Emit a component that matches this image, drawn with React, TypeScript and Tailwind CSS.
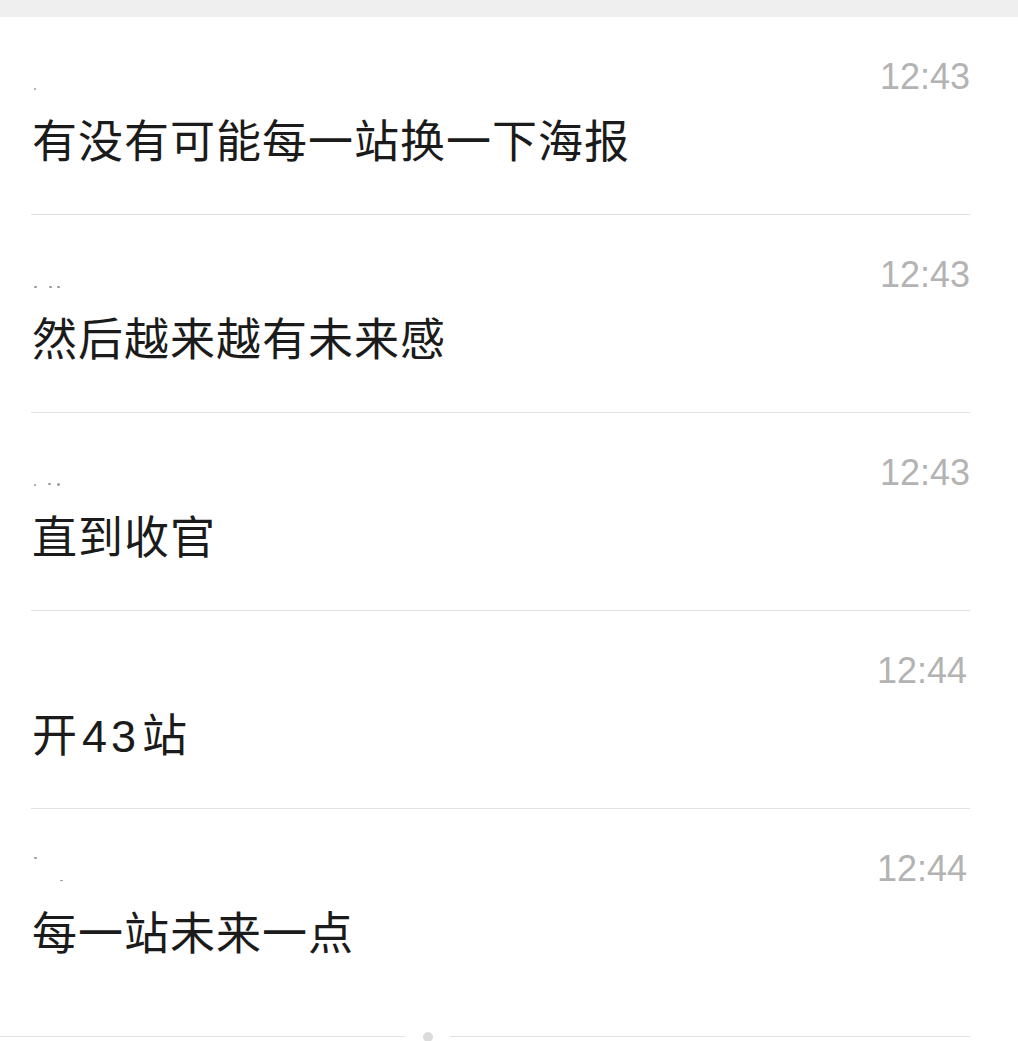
import React from "react";

type Msg = { time: string; text: React.ReactNode; dots: { x: number; y: number; w: number; h: number }[] };

const msgs: Msg[] = [
  { time: "12:43", text: "有没有可能每一站换一下海报", dots: [{ x: 3, y: 29, w: 2, h: 2 }] },
  {
    time: "12:43",
    text: "然后越来越有未来感",
    dots: [
      { x: 3, y: 29, w: 3, h: 2 },
      { x: 18, y: 29, w: 3, h: 2 },
      { x: 26, y: 29, w: 3, h: 2 },
    ],
  },
  {
    time: "12:43",
    text: "直到收官",
    dots: [
      { x: 3, y: 29, w: 2, h: 2 },
      { x: 17, y: 28, w: 3, h: 2 },
      { x: 26, y: 28, w: 3, h: 3 },
    ],
  },
  {
    time: "12:44",
    text: (
      <>
        开<span className="pl-[4px] pr-[2px] tracking-[4px]">43</span>站
      </>
    ),
    dots: [],
  },
  {
    time: "12:44",
    text: "每一站未来一点",
    dots: [
      { x: 3, y: 6, w: 3, h: 2 },
      { x: 29, y: 29, w: 3, h: 1 },
    ],
  },
];

function Row({ m, last }: { m: Msg; last: boolean }) {
  return (
    <div className={last ? "h-[227px]" : "h-[198px] border-b border-[#e2e2e2]"}>
      <div className="pt-[42px] flex justify-between items-start h-[78px]">
        <div className="relative w-[40px] h-[36px]">
          {m.dots.map((d, i) => (
            <span
              key={i}
              className="absolute bg-[#9a9a9a] rounded-full"
              style={{ left: d.x, top: d.y, width: d.w, height: d.h }}
            />
          ))}
        </div>
        <div
          className={
            "text-[36px] leading-[36px] text-[#b3b3b3] " + (m.time === "12:44" ? "pr-[3px]" : "pr-0")
          }
          style={{ fontFamily: '"Liberation Sans", "Noto Sans CJK SC", sans-serif' }}
        >
          {m.time}
        </div>
      </div>
      <div
        className="mt-[25px] text-[45px] leading-[45px] tracking-[1px] text-[#1b1b1b] pl-[1px]"
        style={{ fontFamily: '"Liberation Sans", "Noto Sans CJK SC", "Noto Sans", sans-serif' }}
      >
        {m.text}
      </div>
    </div>
  );
}

export default function App() {
  return (
    <div className="w-[1018px] h-[1041px] bg-white overflow-hidden">
      <div className="h-[17px] bg-[#efefef]" />
      <div className="pl-[31px] pr-[48px]">
        {msgs.map((m, i) => (
          <Row key={i} m={m} last={i === msgs.length - 1} />
        ))}
      </div>
      <div className="relative flex items-center w-[970px] h-[4px]">
        <div className="h-px flex-1 bg-[#e2e2e2] self-start" />
        <div className="w-[45px] flex justify-center">
          <div className="w-[10px] h-[10px] rounded-full bg-[#dcdcdc] -mt-[2px] self-start" />
        </div>
        <div className="h-px w-[520px] bg-[#e2e2e2] self-start" />
      </div>
    </div>
  );
}
